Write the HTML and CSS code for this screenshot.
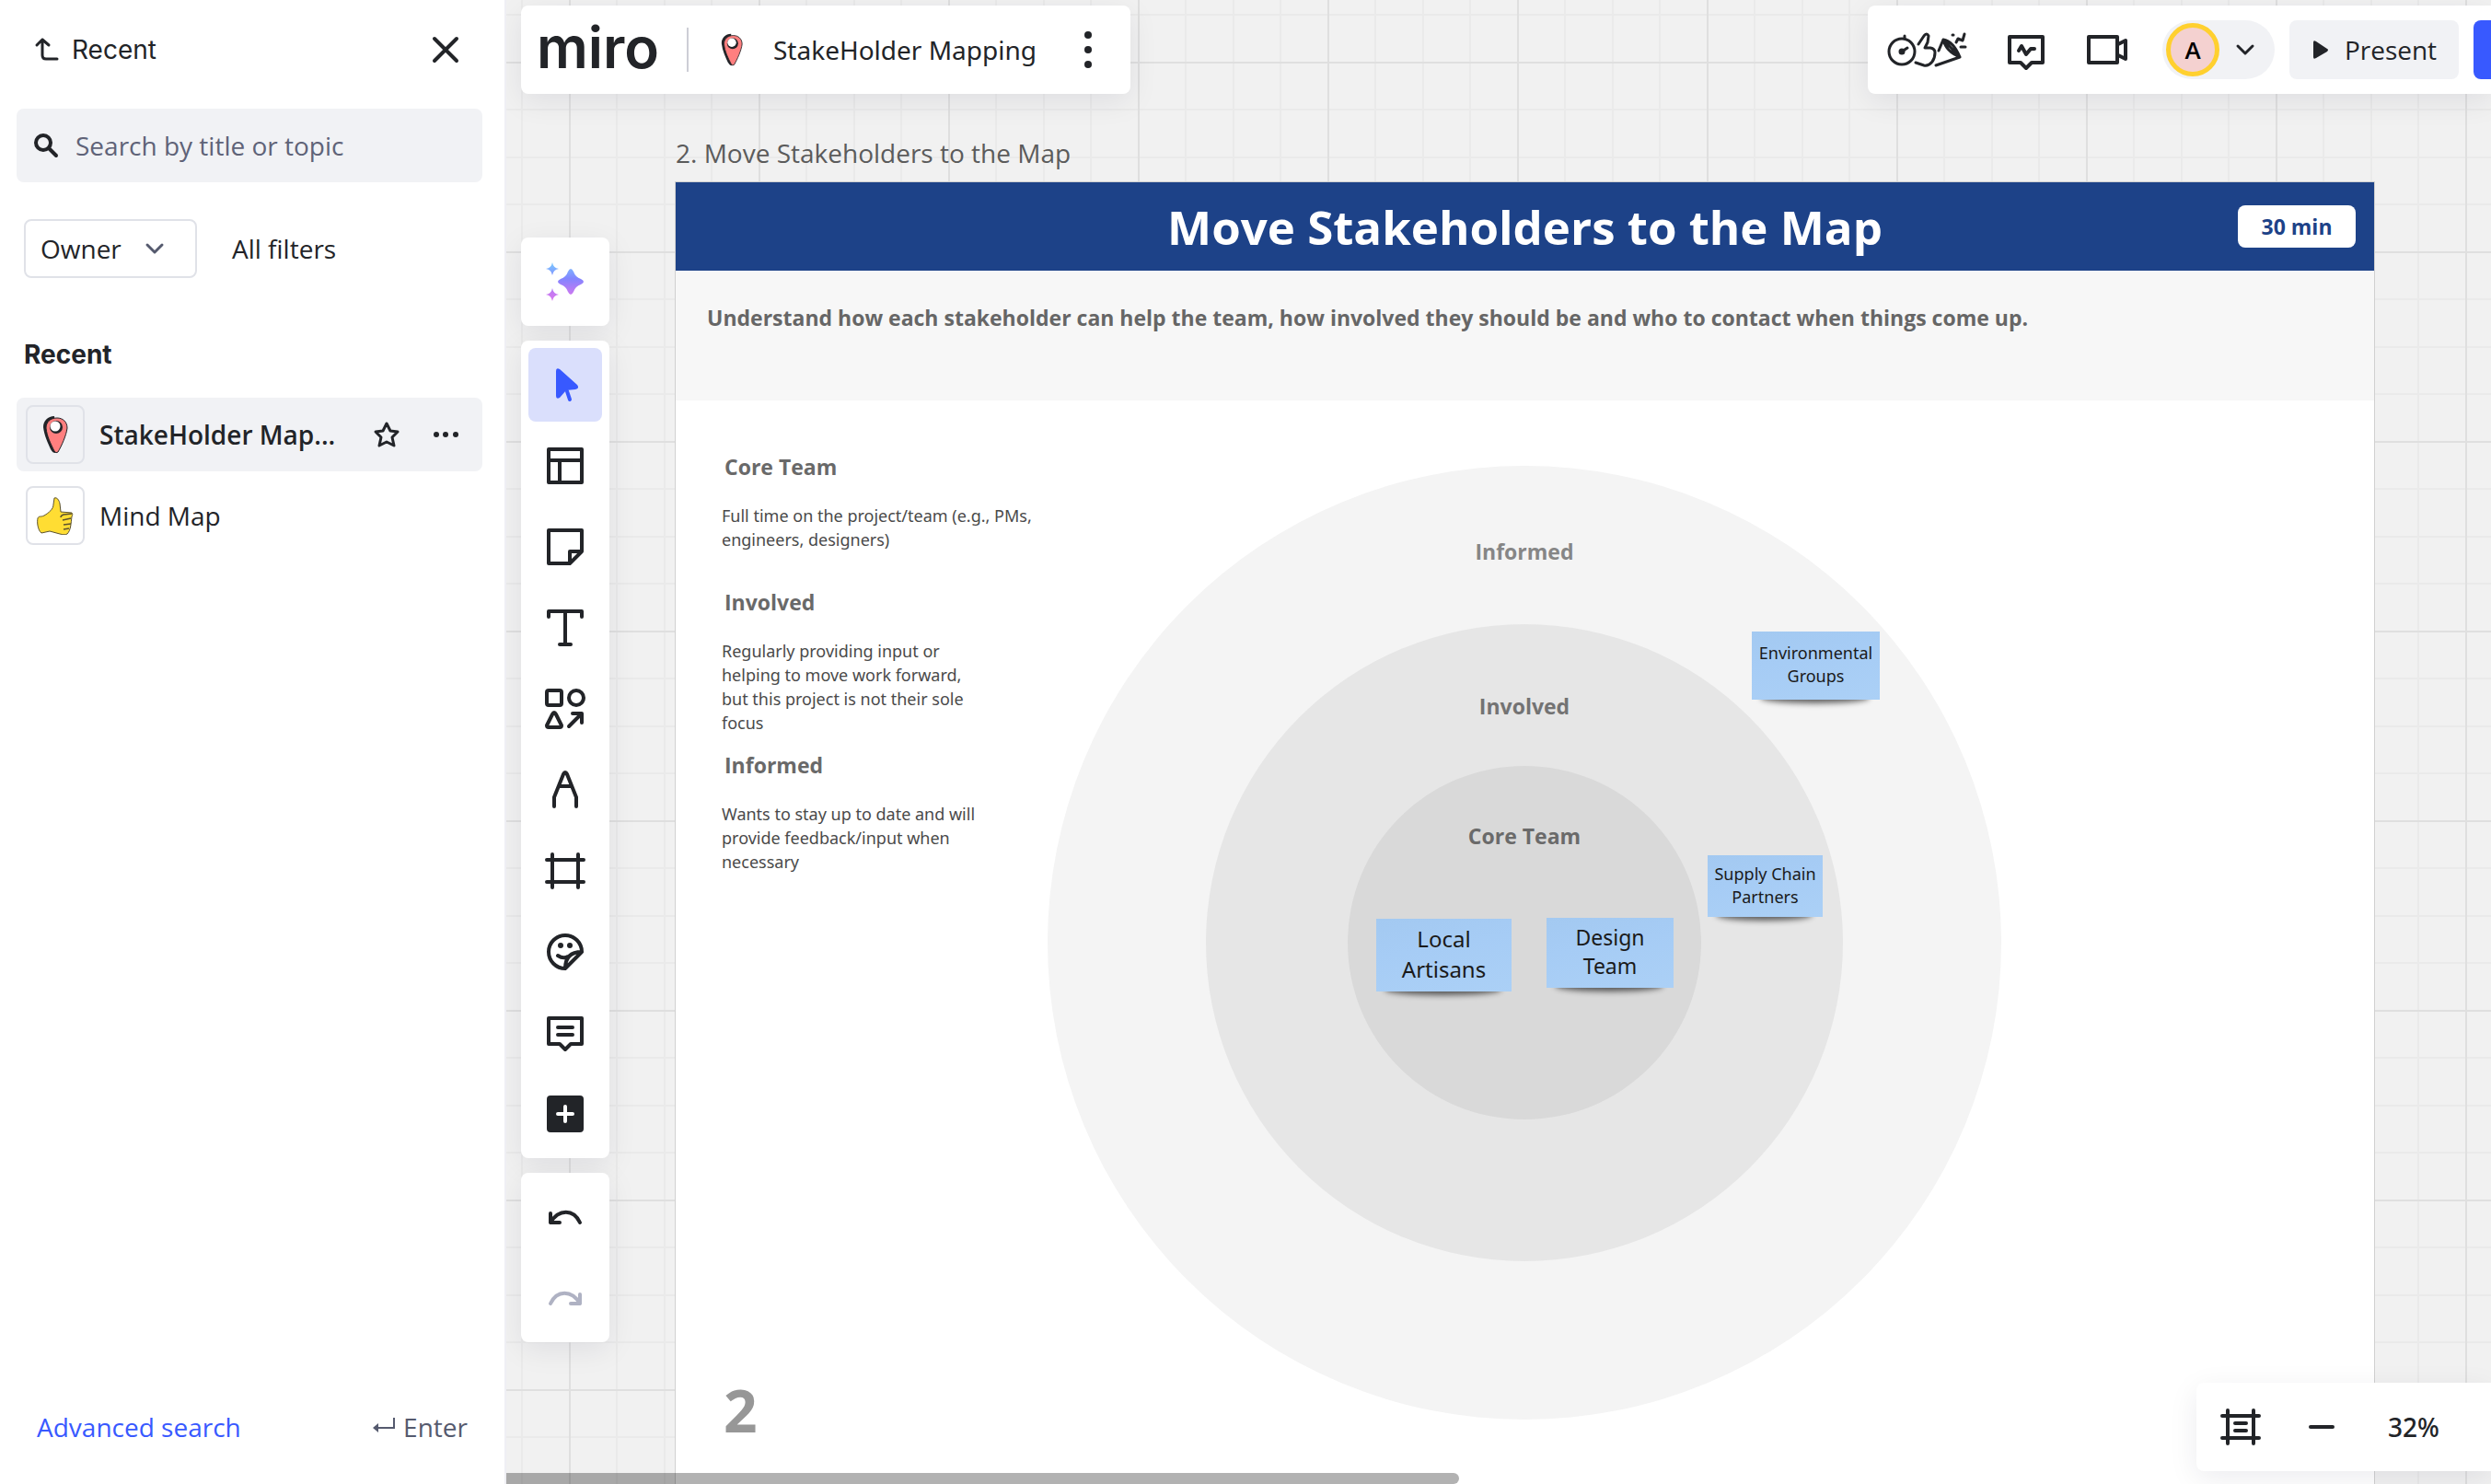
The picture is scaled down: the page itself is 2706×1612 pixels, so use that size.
FILE: index.html
```html
<!DOCTYPE html>
<html lang="en">
<head>
<meta charset="utf-8">
<meta name="viewport" content="width=device-width, initial-scale=1">
<title>StakeHolder Mapping</title>
<link rel="stylesheet" href="styles.css">
</head>
<body>
<svg class="defs" aria-hidden="true">
  <defs>
    <linearGradient id="spark" gradientUnits="userSpaceOnUse" x1="0" y1="4" x2="0" y2="44">
      <stop offset="0" stop-color="#7cc8ff"/><stop offset=".42" stop-color="#8385ff"/><stop offset=".8" stop-color="#c47af2"/><stop offset="1" stop-color="#d77af0"/>
    </linearGradient>
    <symbol id="pin" viewBox="0 0 28 42">
      <path d="M13 1C6 1 1 6 1 13c1 9 5 17 8 24 2 3 3 4 5 4l3-3z" fill="#222428"/>
      <path d="M16 3c6 0 11 4 11 11-1 8-6 19-10 26q-2 2-4-1C9 31 5 23 4 14 4 8 8 3 16 3z" fill="#ff7f7f" stroke="#222428" stroke-width="1"/>
      <circle cx="15" cy="13" r="7" fill="#222428"/><circle cx="14" cy="12" r="5.500" fill="#fff"/>
    </symbol>
  </defs>
</svg>
<div class="app">
  <aside class="sidebar">
    <header class="side-head">
      <button class="back">
        <svg width="28" height="28" viewBox="0 0 28 28" class="line"><path d="M4 9l6-6 7 6M10 3v17q0 4 4 4h12"/></svg>
        Recent
      </button>
      <button class="close" aria-label="Close"><svg width="32" height="32" viewBox="0 0 32 32" class="line thick"><path d="M4 4l24 24M28 4L4 28"/></svg></button>
    </header>
    <label class="search">
      <svg width="28" height="28" viewBox="0 0 28 28" class="line thick"><circle cx="11" cy="11" r="8"/><path d="M17 17l8 8"/></svg>
      <input type="search" placeholder="Search by title or topic" aria-label="Search by title or topic">
    </label>
    <div class="filters">
      <div class="owner">
        <select aria-label="Owner"><option>Owner</option></select>
        <svg width="24" height="24" viewBox="0 0 24 24" class="line muted"><path d="M4 8l8 8 8-8"/></svg>
      </div>
      <button class="all">All filters</button>
    </div>
    <h2>Recent</h2>
    <ul class="boards">
      <li class="current">
        <span class="thumb"><svg width="28" height="42"><use href="#pin"/></svg></span>
        <a href="#stakeholder">StakeHolder Map...</a>
        <button aria-label="Add to favourites"><svg width="32" height="32" viewBox="0 0 32 32" class="line"><path d="M16 4l4 8 8 1-6 6 2 9-8-4-8 4 2-9-6-6 8-1z"/></svg></button>
        <button aria-label="More"><svg width="32" height="32" viewBox="0 0 32 32"><g fill="#222428"><circle cx="6" cy="16" r="3"/><circle cx="16" cy="16" r="3"/><circle cx="27" cy="16" r="3"/></g></svg></button>
      </li>
      <li>
        <span class="thumb"><svg width="42" height="42" viewBox="0 0 42 42"><path d="M20 2c3-1 5 2 6 6l1 9 12 1c1 1 1 2 0 4-1 8-1 15-5 19-2 1-4 1-8 0l-11-3-9 2C2 37 1 28 2 24c1-3 3-1 7-3 5-3 10-7 10-12z" fill="#ffdd33" stroke="#5b5230"/><path d="M39 19l-9 1q-3 1-3 3m11 1l-9 2M38 30l-8 1M36 35l-6 1" fill="none" stroke="#5b5230" stroke-width="1.500"/></svg></span>
        <a href="#mindmap">Mind Map</a>
      </li>
    </ul>
    <footer class="side-foot">
      <a href="#advanced">Advanced search</a>
      <span class="enter"><svg width="26" height="26" viewBox="0 0 26 26"><path d="M24 3v11H6" fill="none" stroke="#555a6e" stroke-width="2"/><path d="M1 14l6-5v10z" fill="#555a6e"/></svg>Enter</span>
    </footer>
  </aside>

  <main class="canvas">
    <p class="frame-name">2. Move Stakeholders to the Map</p>
    <article class="frame">
      <header class="frame-head"><h1>Move Stakeholders to the Map</h1><span class="badge">30 min</span></header>
      <p class="intro">Understand how each stakeholder can help the team, how involved they should be and who to contact when things come up.</p>
      <div class="legend">
        <section><h3>Core Team</h3><p class="wide">Full time on the project/team (e.g., PMs, engineers, designers)</p></section>
        <section><h3>Involved</h3><p>Regularly providing input or helping to move work forward, but this project is not their sole focus</p></section>
        <section><h3>Informed</h3><p>Wants to stay up to date and will provide feedback/input when necessary</p></section>
      </div>
      <div class="ring outer"><span>Informed</span></div>
      <div class="ring middle"><span>Involved</span></div>
      <div class="ring inner"><span>Core Team</span></div>
      <div class="note env">Environmental Groups</div>
      <div class="note supply">Supply Chain Partners</div>
      <div class="note local">Local Artisans</div>
      <div class="note design">Design Team</div>
      <span class="number">2</span>
    </article>

    <header class="bar title-bar">
      <a class="logo" href="#home">miro</a>
      <span class="divider"></span>
      <svg width="28" height="36" class="title-pin"><use href="#pin"/></svg>
      <span class="board-name">StakeHolder Mapping</span>
      <button aria-label="Board menu"><svg width="12" height="48" viewBox="0 0 12 48"><g fill="#222428"><circle cx="6" cy="8" r="4"/><circle cx="6" cy="24" r="4"/><circle cx="6" cy="40" r="4"/></g></svg></button>
    </header>

    <div class="bar action-bar">
      <button aria-label="Facilitation tools" class="facil"><svg width="88" height="40" viewBox="0 0 88 40" class="line"><circle cx="17" cy="22" r="14"/><path d="M17 22l6-4M20 5v3"/><circle cx="17" cy="22" r="2" fill="#222428"/><path d="M35 14l6-9q3-4 5 0l-1 7-3 6 6 0q5 1 5 5 0 6-3 10-4 5-9 4l-9-3"/><path d="M57 21l5-12L80 28 54 37M62 9q11 2 18 19M62 9q3 13 18 19M72 4h1M76 12l2-4 5 2 2-7M81 17h5"/></svg></button>
      <button aria-label="Activity"><svg width="48" height="48" viewBox="0 0 48 48" class="line bold"><path d="M6 10h36v28H30l-6 6-6-6H6zM16 25l3-5 5 9 5-6h4"/></svg></button>
      <button aria-label="Video call"><svg width="48" height="48" viewBox="0 0 48 48" class="line bold"><path d="M4 10h31v28H4zM36 18l8-4v20l-8-4"/></svg></button>
      <button class="user" aria-label="Account"><span class="avatar">A</span><svg width="24" height="24" viewBox="0 0 24 24" class="line"><path d="M4 8l8 8 8-8"/></svg></button>
      <button class="present"><svg width="20" height="24" viewBox="0 0 20 24"><path d="M2 4q0-3 3-1l12 8q2 1 0 3L5 21q-3 2-3-1z" fill="#222428"/></svg>Present</button>
      <button class="share" aria-label="Share"></button>
    </div>

    <nav class="tools" aria-label="Tools">
      <div class="bar group">
        <button aria-label="Create with AI"><svg width="48" height="48" viewBox="0 0 48 48" fill="url(#spark)"><path d="M27 13q3-6 6 0 2 6 8 8 6 3 0 6-6 2-8 8-3 6-6 0-2-6-8-8-6-3 0-6 6-2 8-8z"/><path d="M10 3q1 6 7 7-6 1-7 7-1-6-7-7 6-1 7-7zM10 31q1 6 7 7-6 1-7 7-1-6-7-7 6-1 7-7z"/></svg></button>
      </div>
      <div class="bar group">
        <button class="active" aria-label="Select"><svg width="48" height="48" viewBox="0 0 48 48"><path d="M14 9q0-4 4-2l19 17q3 4-2 5l-10 1-7 8q-4 2-4-2z" fill="#3859ff"/><path d="M26 31l3 9" stroke="#3859ff" stroke-width="4" stroke-linecap="round"/></svg></button>
        <button aria-label="Templates"><svg width="48" height="48" viewBox="0 0 48 48" class="line bold"><path d="M6 6h36v36H6zM6 18h36M18 18v24"/></svg></button>
        <button aria-label="Sticky note"><svg width="48" height="48" viewBox="0 0 48 48" class="line bold"><path d="M6 6h36v23L29 42H6zM29 42V29h13"/></svg></button>
        <button aria-label="Text"><svg width="48" height="48" viewBox="0 0 48 48" class="line bold"><path d="M6 12V6h36v6M24 6v36M18 42h12"/></svg></button>
        <button aria-label="Shapes"><svg width="48" height="48" viewBox="0 0 48 48" class="line bold"><rect x="4" y="4" width="16" height="16" rx="2"/><circle cx="36" cy="12" r="8"/><path d="M12 28q1 0 2 2l6 12q0 2-2 2H6q-2 0-2-2l6-12q1-2 2-2zM28 43l14-14M32 29h10v10"/></svg></button>
        <button aria-label="Pen"><svg width="48" height="48" viewBox="0 0 48 48" class="line bold"><path d="M12 42V32L22 7q2-4 4 0l10 25v10M17 20h14"/></svg></button>
        <button aria-label="Frame"><svg width="48" height="48" viewBox="0 0 48 48" class="line bold"><path d="M4 12h40M4 36h40M10 6v36M38 6v36"/></svg></button>
        <button aria-label="Stickers"><svg width="48" height="48" viewBox="0 0 48 48" class="line bold"><path d="M42 24A18 18 0 1 0 24 42L42 24C30 24 24 30 24 42M16 28q6 4 11 1"/><g fill="#222428" stroke="none"><circle cx="19" cy="17" r="3"/><circle cx="29" cy="17" r="3"/></g></svg></button>
        <button aria-label="Comment"><svg width="48" height="48" viewBox="0 0 48 48" class="line bold"><path d="M6 8h36v28H30l-6 6-6-6H6zM16 18h16M16 26h16"/></svg></button>
        <button aria-label="More tools"><svg width="48" height="48" viewBox="0 0 48 48"><rect x="4" y="4" width="40" height="40" rx="4" fill="#222428"/><path d="M24 16v16M16 24h16" stroke="#fff" stroke-width="4" stroke-linecap="round"/></svg></button>
      </div>
      <div class="bar group">
        <button aria-label="Undo"><svg width="48" height="48" viewBox="0 0 48 48" class="line bold"><path d="M8 20v10h10M8 30C17 15 33 15 40 30"/></svg></button>
        <button aria-label="Redo" disabled><svg width="48" height="48" viewBox="0 0 48 48" class="line bold off"><path d="M40 20v10H30M40 30C31 15 15 15 8 30"/></svg></button>
      </div>
    </nav>

    <div class="bar zoom-bar">
      <button aria-label="Frames"><svg width="48" height="48" viewBox="0 0 48 48" class="line bold"><path d="M4 12h40M4 36h40M10 6v36M38 6v36M18 20h12M18 28h12"/></svg></button>
      <button aria-label="Zoom out"><svg width="48" height="48" viewBox="0 0 48 48" class="line bold"><path d="M12 24h24"/></svg></button>
      <button class="percent">32%</button>
    </div>
    <div class="scroll-thumb"></div>
  </main>
</div>
</body>
</html>
```
FILE: styles.css
```css
* { box-sizing: border-box; }
body {
  margin: 0;
  font: 28px/40px "Open Sans", "Noto Sans", sans-serif;
  color: #222428;
}
h1, h2, h3, p, ul { margin: 0; padding: 0; }
button, input, select {
  font: inherit;
  color: inherit;
  background: none;
  border: 0;
  padding: 0;
  margin: 0;
}
button { display: flex; align-items: center; justify-content: center; cursor: pointer; }
a { color: inherit; text-decoration: none; }
svg { display: block; flex: none; }
.defs { position: absolute; width: 0; height: 0; }
.line { fill: none; stroke: #222428; stroke-width: 3; stroke-linecap: round; stroke-linejoin: round; }
.thick { stroke-width: 4; }
.bold { stroke-width: 4; }
.muted { stroke: #555a6e; }
.off { stroke: #afb2c3; }

.app { display: grid; grid-template-columns: 550px 1fr; height: 100vh; overflow: hidden; }

/* Sidebar */
.sidebar {
  display: flex;
  flex-direction: column;
  padding: 26px 24px 0 18px;
  border-right: 2px solid #efeff4;
  background: #fff;
}
.side-head { display: flex; align-items: center; justify-content: space-between; height: 56px; padding: 0 24px 0 18px; }
.back { gap: 14px; font-family: Inter, sans-serif; }
.search {
  display: flex;
  align-items: center;
  gap: 18px;
  height: 80px;
  margin-top: 36px;
  padding: 0 18px;
  background: #f1f2f5;
  border-radius: 8px;
}
.search input { flex: 1; min-width: 0; outline: 0; }
.search input::placeholder { color: #5f6378; opacity: 1; }
.filters { display: flex; align-items: center; gap: 38px; margin: 40px 8px 0; }
.owner { display: grid; width: 188px; }
.owner > * { grid-area: 1 / 1; }
.owner select { appearance: none; height: 64px; padding-left: 16px; border: 2px solid #e0e2e8; border-radius: 8px; background: #fff; }
.owner svg { place-self: center end; margin-right: 34px; pointer-events: none; }
.sidebar h2 { margin: 63px 8px 0; font: 700 28px/40px Inter, sans-serif; }
.boards { list-style: none; margin-top: 27px; display: grid; gap: 8px; }
.boards li { display: flex; align-items: center; height: 80px; padding: 0 10px; border-radius: 8px; }
.boards .current { background: #f1f2f5; font-weight: 600; }
.boards a { width: 256px; margin: 0 40px 0 16px; white-space: nowrap; }
.boards button + button { margin-left: 32px; }
.thumb { display: grid; place-items: center; flex: none; width: 64px; height: 64px; border: 2px solid #e0e2e8; border-radius: 8px; }
.side-foot { display: flex; justify-content: space-between; margin-top: auto; padding: 0 16px 42px 22px; }
.side-foot a { color: #3859ff; }
.enter { display: flex; align-items: center; gap: 8px; color: #555a6e; }

/* Canvas with its grid */
.canvas {
  position: relative;
  overflow: hidden;
  background-color: #f1f1f1;
  background-image:
    linear-gradient(#dfdfdf 2px, transparent 2px),
    linear-gradient(90deg, #dfdfdf 2px, transparent 2px),
    linear-gradient(transparent 51px, #eaeaea 51px 53px, transparent 53px 103px, #eaeaea 103px 105px, transparent 105px 154px, #eaeaea 154px 156px, transparent 156px),
    linear-gradient(90deg, transparent 51px, #eaeaea 51px 53px, transparent 53px 103px, #eaeaea 103px 105px, transparent 105px 154px, #eaeaea 154px 156px, transparent 156px);
  background-size: 206px 206px;
  background-position: 68px 67px;
}
.frame-name { position: absolute; left: 184px; top: 146px; color: #5b5b5b; }
.frame {
  position: absolute;
  isolation: isolate;
  left: 183px;
  top: 197px;
  bottom: 0;
  width: 1847px;
  border: 1px solid #d0d0d0;
  border-bottom: 0;
  background: #fff;
}
.frame-head { display: grid; align-items: center; height: 96px; background: #1d4288; }
.frame-head > * { grid-area: 1 / 1; }
.frame-head h1 { color: #fff; font-size: 51px; line-height: 72px; font-weight: 700; text-align: center; }
.badge {
  justify-self: end;
  width: 128px;
  margin-right: 20px;
  font-size: 23px;
  font-weight: 700;
  line-height: 46px;
  text-align: center;
  color: #1d4288;
  background: #fff;
  border-radius: 8px;
}
.intro { height: 141px; padding: 35px 34px; background: #f7f7f7; color: #666; font-size: 23px; line-height: 32px; font-weight: 700; }
.legend { padding: 56px 0 0 50px; color: #4a4a4a; }
.legend section { display: grid; gap: 24px; margin-bottom: 17px; }
.legend section:first-child { margin-bottom: 39px; }
.legend h3 { padding-left: 3px; color: #696969; font-size: 23px; line-height: 32px; }
.legend p { width: 280px; font-family: "Noto Sans", sans-serif; font-size: 18px; line-height: 26px; }
.legend .wide { width: 350px; }

.ring { position: absolute; z-index: -2; border-radius: 50%; text-align: center; font-size: 23px; line-height: 32px; font-weight: 700; }
.outer { left: 404px; top: 308px; width: 1036px; height: 1036px; padding-top: 77px; background: #f4f4f4; color: #868686; }
.middle { left: 576px; top: 480px; width: 692px; height: 692px; padding-top: 73px; background: #e6e6e6; color: #737373; }
.inner { left: 730px; top: 634px; width: 384px; height: 384px; padding-top: 60px; background: #d9d9d9; color: #6a6a6a; }

.note {
  position: absolute;
  text-align: center;
  color: #1a1a1a;
  font-family: "Noto Sans", sans-serif;
  background: linear-gradient(170deg, #a3c9f1, #a6ccf5 40%, #abd0f6);
}
.note::after {
  content: "";
  position: absolute;
  z-index: -1;
  left: 10px;
  right: 12px;
  bottom: -4px;
  height: 12px;
  border-radius: 0 0 50% 50%;
  background: rgba(0, 0, 0, .6);
  filter: blur(3px);
}
.env { left: 1169px; top: 488px; width: 139px; height: 74px; padding: 11px 4px; font-size: 18px; line-height: 25px; }
.supply { left: 1121px; top: 731px; width: 125px; height: 67px; padding-top: 8px; font-size: 18px; line-height: 25px; }
.local { left: 761px; top: 800px; width: 147px; height: 79px; padding: 5px 24px; font-size: 24px; line-height: 33px; }
.design { left: 946px; top: 799px; width: 138px; height: 76px; padding: 6px 24px; font-size: 23px; line-height: 31px; }
.number { position: absolute; left: 52px; top: 1290px; color: #979797; font-size: 64px; line-height: 88px; font-weight: 700; }

/* Floating panels */
.bar { background: #fff; border-radius: 8px; box-shadow: 0 8px 32px rgba(5, 0, 56, .08); }
.title-bar { position: absolute; left: 16px; top: 6px; display: flex; align-items: center; height: 96px; width: 662px; padding-left: 17px; }
.logo { width: 132px; padding-bottom: 4px; font: 600 62px/72px Inter, sans-serif; }
.divider { width: 2px; height: 48px; margin-left: 31px; background: #cdced6; }
.title-pin { margin: 0 31px 0 33px; }
.board-name { font-family: "Noto Sans", sans-serif; white-space: nowrap; }
.title-bar button { margin: 0 40px 0 auto; }
.action-bar { position: absolute; right: 0; top: 6px; display: flex; align-items: center; height: 96px; padding-left: 20px; border-radius: 8px 0 0 8px; }
.action-bar button + button { margin-left: 40px; }
.facil { width: 88px; }
.action-bar .user { width: 122px; height: 64px; margin-left: 36px; padding: 0 20px 0 4px; justify-content: space-between; background: #f1f2f5; border-radius: 32px; }
.avatar { width: 58px; height: 58px; border: 5px solid #ffd02f; border-radius: 50%; background: #f4d1d0; color: #000; font-size: 26px; line-height: 48px; font-weight: 600; }
.action-bar .present { width: 184px; height: 64px; margin-left: 16px; gap: 16px; background: #f1f2f5; border-radius: 8px; }
.action-bar .share { width: 19px; height: 64px; margin-left: 16px; background: #3859ff; border-radius: 8px 0 0 8px; }

.tools { position: absolute; left: 16px; top: 258px; display: grid; gap: 16px; }
.group { display: grid; gap: 8px; padding: 8px; }
.group button { width: 80px; height: 80px; border-radius: 8px; }
.group .active { background: #dadffc; }

.zoom-bar { position: absolute; right: 0; bottom: 14px; display: flex; align-items: center; gap: 40px; width: 320px; height: 96px; padding-left: 24px; border-radius: 8px 0 0 8px; }
.zoom-bar .percent { margin-left: 8px; font-family: "Noto Sans", sans-serif; font-weight: 500; }
.scroll-thumb { position: absolute; left: 0; bottom: 0; width: 48%; height: 12px; border-radius: 0 6px 6px 0; background: rgba(0, 0, 0, .3); }
```
